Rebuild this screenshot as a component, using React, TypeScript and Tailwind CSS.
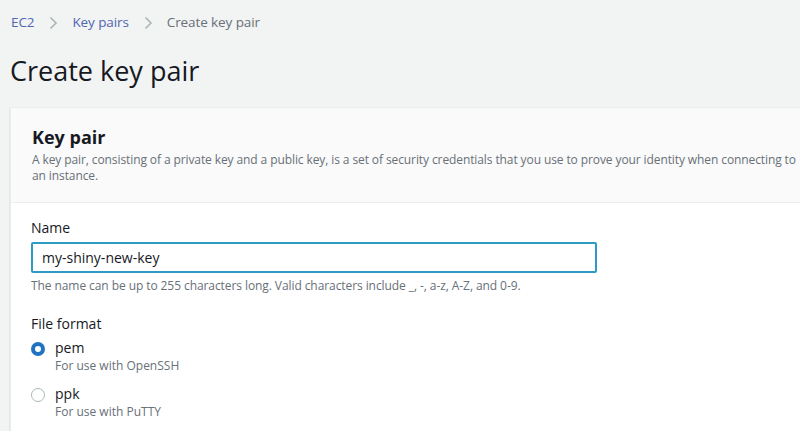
import React, { useState } from "react";

function Chevron() {
  return (
    <svg className="h-4 w-4 text-[#aab7b8]" viewBox="0 0 16 16" fill="none" aria-hidden="true">
      <path d="M5.5 2.5 11 8l-5.5 5.5" stroke="currentColor" strokeWidth="1.6" />
    </svg>
  );
}

function Radio({ checked }: { checked: boolean }) {
  return checked ? (
    <span className="mt-[4px] flex h-[14px] w-[14px] shrink-0 items-center justify-center rounded-full bg-[#1f73c1]">
      <span className="h-[6px] w-[6px] rounded-full bg-white" />
    </span>
  ) : (
    <span className="mt-[4px] h-[14px] w-[14px] shrink-0 rounded-full border border-[#aab7b8] bg-white" />
  );
}

export default function App() {
  const [name, setName] = useState("my-shiny-new-key");
  const [format, setFormat] = useState("pem");

  return (
    <div className="h-[431px] overflow-hidden bg-[#f2f3f3] font-['Open_Sans',sans-serif] text-[#16191f]">
      <nav className="flex h-[44px] items-center gap-[11px] pl-[11px] pt-[1px] text-[13.5px] tracking-[-0.1px]">
        <a href="#" className="text-[#5167b2]">EC2</a>
        <Chevron />
        <a href="#" className="text-[#5167b2]">Key pairs</a>
        <Chevron />
        <span className="text-[#687078]">Create key pair</span>
      </nav>
      <h1 className="pl-[10px] pt-[7px] text-[27px] leading-[40px]">Create key pair</h1>

      <div className="ml-[10px] mr-[-40px] mt-[16px] border-l border-t border-[#eaeded] bg-white shadow-[0_1px_1px_0_rgba(0,28,36,0.3)]">
        <div className="border-b border-[#eaeded] bg-[#fafafa] pb-[18px] pl-[21px] pr-[40px] pt-[18px]">
          <h2 className="text-[18px] font-bold leading-[22px]">Key pair</h2>
          <p className="mt-[4px] text-[12px] leading-[16px] tracking-[-0.1px] text-[#687078]">
            A key pair, consisting of a private key and a public key, is a set of security credentials that you use to prove your identity when connecting to an instance.
          </p>
        </div>

        <div className="px-[20px] pt-[15px] pb-[20px]">
          <label htmlFor="key-name" className="block text-[14px] leading-[20px]">Name</label>
          <input
            id="key-name"
            value={name}
            onChange={(e) => setName(e.target.value)}
            className="mt-[4px] block h-[31px] w-[566px] rounded-[2px] border-2 border-[#2e9bc6] bg-white px-[9px] text-[14px] text-[#16191f] outline-none"
          />
          <p className="mt-[5px] text-[12px] leading-[16px] tracking-[-0.08px] text-[#687078]">
            The name can be up to 255 characters long. Valid characters include _, -, a-z, A-Z, and 0-9.
          </p>

          <div className="mt-[20px] text-[14px] leading-[20px]">File format</div>
          <div className="mt-[4px] flex flex-col gap-[10px]">
            {[
              { id: "pem", hint: "For use with OpenSSH" },
              { id: "ppk", hint: "For use with PuTTY" },
            ].map((opt) => (
              <label
                key={opt.id}
                className="flex cursor-pointer gap-[10px]"
                onClick={() => setFormat(opt.id)}
              >
                <Radio checked={format === opt.id} />
                <span>
                  <span className="block text-[14px] leading-[20px]">{opt.id}</span>
                  <span className="block text-[12px] leading-[16px] text-[#687078]">{opt.hint}</span>
                </span>
              </label>
            ))}
          </div>
        </div>
      </div>
    </div>
  );
}
